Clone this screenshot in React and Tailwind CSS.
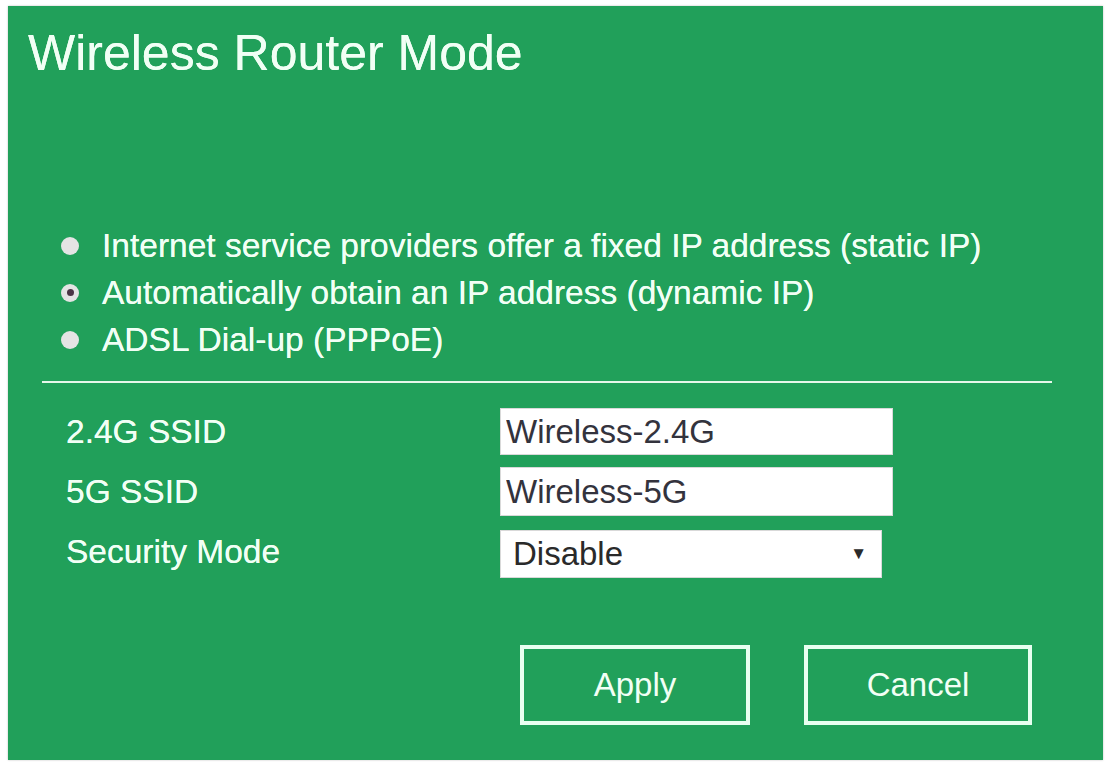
import React, { useState } from "react";

const options = [
  "Internet service providers offer a fixed IP address (static IP)",
  "Automatically obtain an IP address (dynamic IP)",
  "ADSL Dial-up (PPPoE)",
];

const RouterModePage = () => {
  const [mode, setMode] = useState(1);
  const [ssid24, setSsid24] = useState("Wireless-2.4G");
  const [ssid5, setSsid5] = useState("Wireless-5G");

  return (
    <div className="bg-white w-[1107px] h-[764px] pt-[6px] pl-[8px] font-['Liberation_Sans',Arial,sans-serif]">
      <div className="bg-[#21a05a] w-[1095px] h-[754px] flex flex-col text-[#f1fff5] [text-shadow:0_0_0.6px_#f1fff5] shadow-[0_0_2px_rgba(0,0,0,0.25)]">
        <h1 className="pt-[22px] pl-[20px] text-[50px] leading-none">
          Wireless Router Mode
        </h1>

        <div className="mt-[144px] pl-[53px] flex flex-col">
          {options.map((label, i) => (
            <div
              key={label}
              className="h-[47px] flex items-center cursor-pointer"
              onClick={() => setMode(i)}
            >
              <span className="w-[18px] h-[18px] rounded-full bg-[#e4e4e4] flex items-center justify-center">
                {mode === i && (
                  <span className="w-[7px] h-[7px] rounded-full bg-[#4a3445]"></span>
                )}
              </span>
              <span className="ml-[23px] text-[33.5px] leading-none">{label}</span>
            </div>
          ))}
        </div>

        <div className="mt-[18px] ml-[34px] w-[1010px] h-[2px] bg-[#e6f7ea]"></div>

        <div className="mt-[25px] pl-[58px] grid grid-cols-[434px_auto] gap-y-[13px] auto-rows-[47px] items-center text-[33.5px] leading-none">
          <label>2.4G SSID</label>
          <input
            type="text"
            className="w-[393px] h-[47px] bg-white border border-[#d9d9d9] px-[5px] text-[33px] text-[#33333d] outline-none [text-shadow:none]"
            value={ssid24}
            onChange={(e) => setSsid24(e.target.value)}
          />
          <label>5G SSID</label>
          <input
            type="text"
            className="w-[393px] h-[49px] bg-white border border-[#d9d9d9] px-[5px] text-[33px] text-[#33333d] outline-none [text-shadow:none]"
            value={ssid5}
            onChange={(e) => setSsid5(e.target.value)}
          />
          <label>Security Mode</label>
          <div className="w-[382px] h-[48px] mt-[4px] bg-white border border-[#d9d9d9] pl-[12px] pr-[14px] flex items-center justify-between text-[#2a2a2a] [text-shadow:none]">
            <span className="text-[33px]">Disable</span>
            <span className="text-[17px]">▼</span>
          </div>
        </div>

        <div className="mt-[70px] pl-[512px] flex gap-[54px]">
          <button className="w-[230px] h-[80px] border-[4px] border-[#e8fff0] text-[33px] text-[#f1fff5]">
            Apply
          </button>
          <button className="w-[228px] h-[80px] border-[4px] border-[#e8fff0] text-[33px] text-[#f1fff5]">
            Cancel
          </button>
        </div>
      </div>
    </div>
  );
};

export default RouterModePage;
